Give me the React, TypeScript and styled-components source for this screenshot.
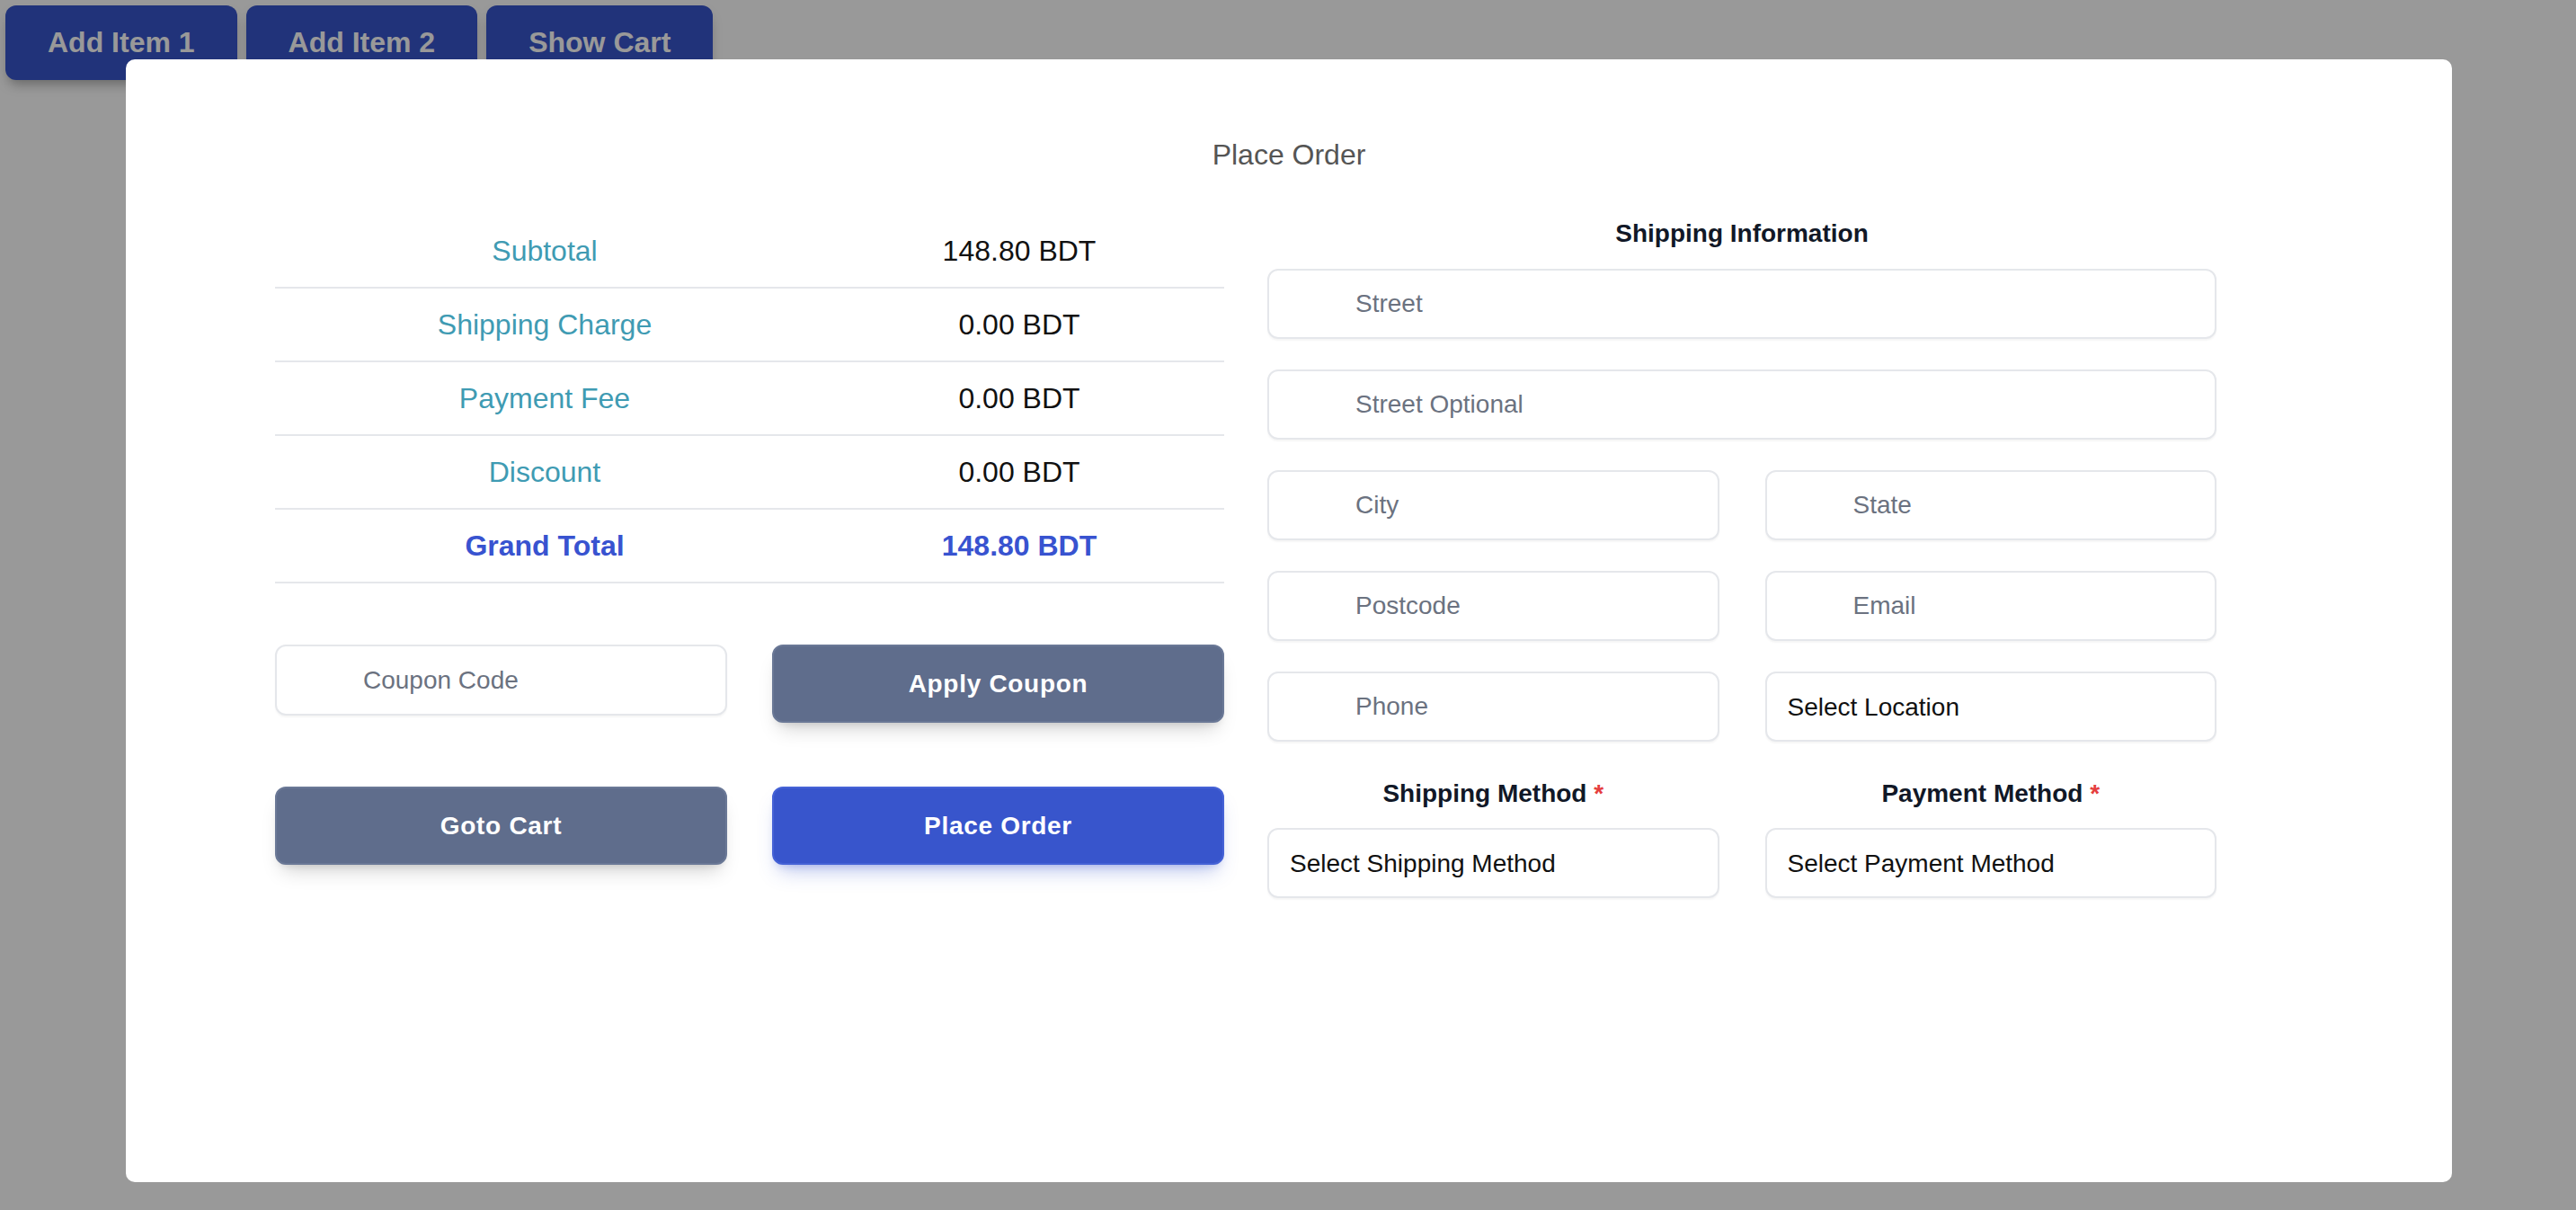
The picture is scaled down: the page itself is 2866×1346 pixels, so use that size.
import React from "react";
import styled, { createGlobalStyle } from "styled-components";

const GlobalStyle = createGlobalStyle`
  html, body {
    margin: 0;
    padding: 0;
    background: #ffffff;
  }
  body {
    font-family: "Liberation Sans", Arial, Helvetica, sans-serif;
  }
  * { box-sizing: border-box; }
`;

const Page = styled.div`
  position: relative;
  width: 100%;
  min-height: 1346px;
`;

const Toolbar = styled.div`
  display: flex;
  gap: 10px;
  padding: 6px;
`;

const TopButton = styled.button`
  height: 83px;
  padding: 0 47px;
  border: none;
  border-radius: 12px;
  background: #3855cc;
  color: #ffffff;
  font-family: "Liberation Sans", Arial, sans-serif;
  font-weight: 700;
  font-size: 32px;
  line-height: 37px;
  box-shadow: 0 8px 14px -4px rgba(0, 0, 0, 0.35);
  cursor: pointer;
`;

const Overlay = styled.div`
  position: fixed;
  inset: 0;
  background: rgba(0, 0, 0, 0.4);
`;

const Modal = styled.div`
  position: fixed;
  top: 66px;
  left: 140px;
  width: 2588px;
  height: 1249px;
  background: #ffffff;
  border-radius: 10px;
  padding-top: 88px;
`;

const Title = styled.h2`
  margin: 0 0 48px;
  text-align: center;
  font-size: 32px;
  line-height: 37px;
  font-weight: 400;
  color: #555555;
`;

const Body = styled.div`
  display: grid;
  grid-template-columns: 1056px 1056px;
  column-gap: 48px;
  align-items: start;
  padding-left: 166px;
`;

const Column = styled.div`
  display: flex;
  flex-direction: column;
`;

const SummaryRow = styled.div<{ $total?: boolean }>`
  display: grid;
  grid-template-columns: 600px 1fr;
  align-items: center;
  height: 82px;
  border-bottom: 2px solid #e5e7eb;
  text-align: center;
  font-size: 32px;
  line-height: 37px;
  font-weight: ${(p) => (p.$total ? 700 : 400)};
`;

const SummaryLabel = styled.span<{ $total?: boolean }>`
  color: ${(p) => (p.$total ? "#3853d0" : "#3f9bb3")};
`;

const SummaryValue = styled.span<{ $total?: boolean }>`
  color: ${(p) => (p.$total ? "#3853d0" : "#111111")};
`;

const Actions = styled.div`
  display: grid;
  grid-template-columns: 1fr 1fr;
  column-gap: 50px;
  row-gap: 71px;
  align-items: start;
  margin-top: 68px;
`;

const TextField = styled.input<{ $wide?: boolean }>`
  grid-column: ${(p) => (p.$wide ? "1 / -1" : "auto")};
  width: 100%;
  height: 78px;
  padding: 0 20px 0 96px;
  border: 2px solid #e5e7eb;
  border-radius: 12px;
  background: #ffffff;
  box-shadow: 0 2px 2px rgba(0, 0, 0, 0.04);
  font-family: "Liberation Sans", Arial, sans-serif;
  font-size: 28px;
  color: #111111;
  outline: none;
  &::placeholder {
    color: #6b7280;
  }
`;

const CouponField = styled(TextField)`
  height: 79px;
`;

const ActionButton = styled.button<{ $primary?: boolean }>`
  height: 87px;
  width: 100%;
  border: 2px solid ${(p) => (p.$primary ? "#4562d6" : "#6a7896")};
  border-radius: 12px;
  background: ${(p) => (p.$primary ? "#3855cc" : "#5f6d8c")};
  color: #ffffff;
  font-family: "Liberation Sans", Arial, sans-serif;
  font-weight: 700;
  font-size: 28px;
  letter-spacing: 0.7px;
  box-shadow: ${(p) =>
    p.$primary
      ? "0 14px 22px -8px rgba(56, 85, 204, 0.35), 0 6px 10px -6px rgba(56, 85, 204, 0.3)"
      : "0 14px 22px -8px rgba(0, 0, 0, 0.18), 0 6px 10px -6px rgba(0, 0, 0, 0.15)"};
  cursor: pointer;
`;

const Heading = styled.h3`
  margin: 0 0 18px;
  text-align: center;
  font-size: 28px;
  line-height: 42px;
  font-weight: 700;
  color: #111827;
`;

const FieldGrid = styled.div`
  display: grid;
  grid-template-columns: 1fr 1fr;
  column-gap: 51px;
  row-gap: 34px;
`;

const MethodGrid = styled.div`
  display: grid;
  grid-template-columns: 1fr 1fr;
  column-gap: 51px;
  row-gap: 22px;
  margin-top: 42px;
`;

const MethodLabel = styled.div`
  text-align: center;
  font-size: 28px;
  line-height: 32px;
  font-weight: 700;
  color: #111827;
`;

const Required = styled.span`
  color: #e53e3e;
  font-weight: 700;
`;

const SelectField = styled.select`
  width: 100%;
  height: 78px;
  padding: 0 20px 0 23px;
  border: 2px solid #e5e7eb;
  border-radius: 12px;
  background: #ffffff;
  box-shadow: 0 2px 2px rgba(0, 0, 0, 0.04);
  font-family: "Liberation Sans", Arial, sans-serif;
  font-size: 28px;
  color: #111111;
  appearance: none;
  -webkit-appearance: none;
  outline: none;
`;

const summary = [
  { label: "Subtotal", value: "148.80 BDT" },
  { label: "Shipping Charge", value: "0.00 BDT" },
  { label: "Payment Fee", value: "0.00 BDT" },
  { label: "Discount", value: "0.00 BDT" },
  { label: "Grand Total", value: "148.80 BDT", total: true },
];

export default function App() {
  return (
    <Page>
      <GlobalStyle />
      <Toolbar>
        <TopButton>Add Item 1</TopButton>
        <TopButton>Add Item 2</TopButton>
        <TopButton>Show Cart</TopButton>
      </Toolbar>
      <Overlay />
      <Modal>
        <Title>Place Order</Title>
        <Body>
          <Column>
            {summary.map((row) => (
              <SummaryRow key={row.label} $total={row.total}>
                <SummaryLabel $total={row.total}>{row.label}</SummaryLabel>
                <SummaryValue $total={row.total}>{row.value}</SummaryValue>
              </SummaryRow>
            ))}
            <Actions>
              <CouponField placeholder="Coupon Code" />
              <ActionButton>Apply Coupon</ActionButton>
              <ActionButton>Goto Cart</ActionButton>
              <ActionButton $primary>Place Order</ActionButton>
            </Actions>
          </Column>
          <Column>
            <Heading>Shipping Information</Heading>
            <FieldGrid>
              <TextField $wide placeholder="Street" />
              <TextField $wide placeholder="Street Optional" />
              <TextField placeholder="City" />
              <TextField placeholder="State" />
              <TextField placeholder="Postcode" />
              <TextField placeholder="Email" />
              <TextField placeholder="Phone" />
              <SelectField defaultValue="">
                <option value="">Select Location</option>
              </SelectField>
            </FieldGrid>
            <MethodGrid>
              <MethodLabel>
                Shipping Method <Required>*</Required>
              </MethodLabel>
              <MethodLabel>
                Payment Method <Required>*</Required>
              </MethodLabel>
              <SelectField defaultValue="">
                <option value="">Select Shipping Method</option>
              </SelectField>
              <SelectField defaultValue="">
                <option value="">Select Payment Method</option>
              </SelectField>
            </MethodGrid>
          </Column>
        </Body>
      </Modal>
    </Page>
  );
}
